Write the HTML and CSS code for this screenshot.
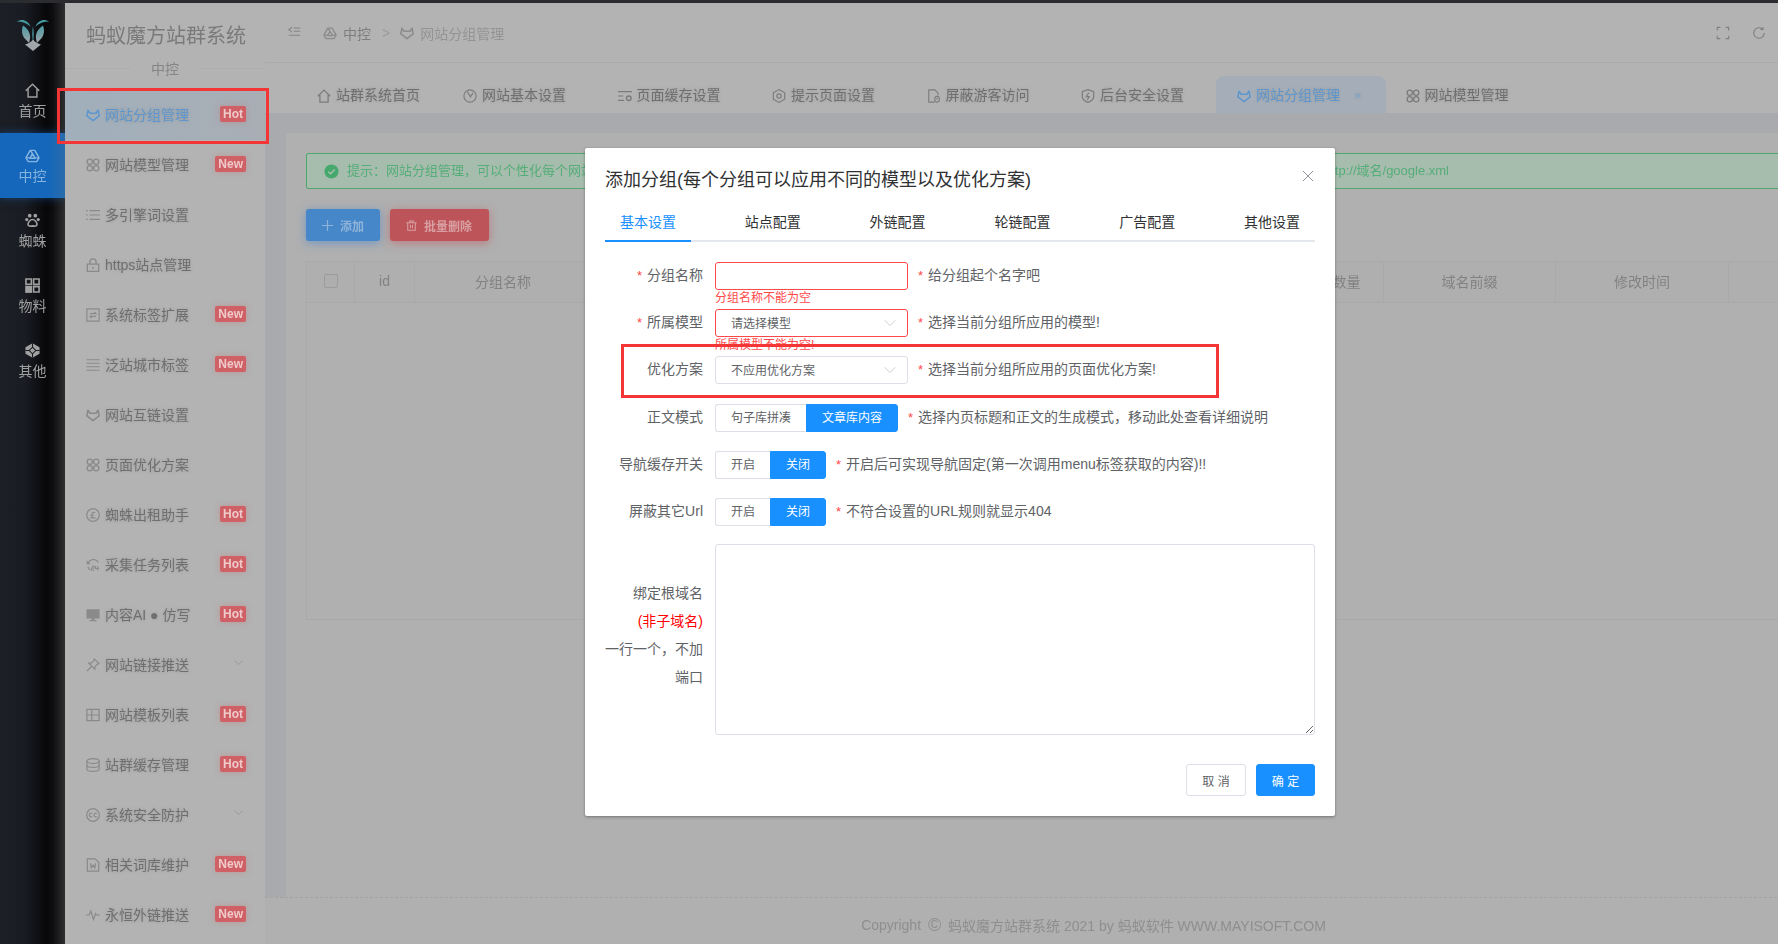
FILE: index.html
```html
<!DOCTYPE html>
<html lang="zh-CN">
<head>
<meta charset="utf-8">
<title>蚂蚁魔方站群系统</title>
<link rel="stylesheet" href="styles.css">
</head>
<body>
<svg class="defs" width="0" height="0" aria-hidden="true">
  <defs>
    <symbol id="i-fox" viewBox="0 0 16 16"><path d="M2.2 2.5 4.6 6h6.800l2.400-3.500L15 9l-7 5.500L1 9z" fill="none" stroke="currentColor" stroke-width="1.800" stroke-linejoin="round"/></symbol>
    <symbol id="i-apps" viewBox="0 0 16 16"><g fill="none" stroke="currentColor" stroke-width="1.500"><circle cx="4.300" cy="4.300" r="3"/><circle cx="11.700" cy="4.300" r="3"/><circle cx="4.300" cy="11.700" r="3"/><circle cx="11.700" cy="11.700" r="3"/></g></symbol>
    <symbol id="i-list" viewBox="0 0 16 16"><path d="M0 3h2M0 8h2M0 13h2M4 3h12M4 8h12M4 13h12" fill="none" stroke="currentColor" stroke-width="1.300"/></symbol>
    <symbol id="i-lock" viewBox="0 0 16 16"><path d="M1.500 7h13v8.300h-13zM4.500 7V4.500a3.500 3.500 0 0 1 7 0V7M8 10v2.500" fill="none" stroke="currentColor" stroke-width="1.500"/></symbol>
    <symbol id="i-tag" viewBox="0 0 16 16"><path d="M1 1h14v14H1zM4.500 6.500h7L9.500 4.500M11.500 9.500h-7l2 2" fill="none" stroke="currentColor" stroke-width="1.300"/></symbol>
    <symbol id="i-lines" viewBox="0 0 16 16"><path d="M.5 2h15M.5 6h15M.5 10h15M.5 14h15" fill="none" stroke="currentColor" stroke-width="1.300"/></symbol>
    <symbol id="i-pound" viewBox="0 0 16 16"><circle cx="8" cy="8" r="7.200" fill="none" stroke="currentColor" stroke-width="1.400"/><path d="M10.500 5.500A2.200 2.200 0 0 0 6.800 7v4M5 8.300h4M5 11.300h6" fill="none" stroke="currentColor" stroke-width="1.300"/></symbol>
    <symbol id="i-24" viewBox="0 0 16 16"><path d="M2.500 6A6.300 6.300 0 0 1 14 5M1.500 3.500v3h3M2.200 10a6.300 6.300 0 0 0 2.800 3.800" fill="none" stroke="currentColor" stroke-width="1.400"/><path d="M6.500 9.500h2.700v2H6.500v2.500h3M11 9v3h4M13.500 9v5.500" fill="none" stroke="currentColor" stroke-width="1.200"/></symbol>
    <symbol id="i-screen" viewBox="0 0 16 16"><path d="M.5 1.500h15V12H9.500v1.700H12V15H4v-1.300h2.500V12H.5z" fill="currentColor"/></symbol>
    <symbol id="i-pin" viewBox="0 0 16 16"><path d="M9.500 1 15 6.500 13 7l-3 3.500.3 2.500L3 5.700l2.500.3L9 3zM6 10 1 15" fill="none" stroke="currentColor" stroke-width="1.400" stroke-linejoin="round"/></symbol>
    <symbol id="i-table" viewBox="0 0 16 16"><path d="M1 1.500h14v13H1zM1 8h14M6.500 1.500v13" fill="none" stroke="currentColor" stroke-width="1.400"/></symbol>
    <symbol id="i-db" viewBox="0 0 16 16"><g fill="none" stroke="currentColor" stroke-width="1.400"><ellipse cx="8" cy="3.500" rx="7" ry="2.800"/><path d="M1 3.500v9c0 1.500 3.100 2.800 7 2.800s7-1.300 7-2.800v-9M1 8c0 1.500 3.100 2.800 7 2.800s7-1.300 7-2.800"/></g></symbol>
    <symbol id="i-cc" viewBox="0 0 16 16"><circle cx="8" cy="8" r="7.200" fill="none" stroke="currentColor" stroke-width="1.400"/><path d="M7 6.300a2.100 2.100 0 1 0 0 3.400M12.300 6.300a2.100 2.100 0 1 0 0 3.400" fill="none" stroke="currentColor" stroke-width="1.300"/></symbol>
    <symbol id="i-word" viewBox="0 0 16 16"><path d="M1.500 1h9L14.500 5v10h-13zM5 6l1 5.500 2-3.500 2 3.500 1-5.500" fill="none" stroke="currentColor" stroke-width="1.400"/></symbol>
    <symbol id="i-pulse" viewBox="0 0 16 16"><path d="M0 8h3.500L5.500 3.500l3 9.500L11 6.500l1 1.500h4" fill="none" stroke="currentColor" stroke-width="1.400"/></symbol>
    <symbol id="i-home" viewBox="0 0 16 16"><path d="M.8 8.200 8 1.300l7.200 6.900M3.300 6.500v8.500h9.400V6.500" fill="none" stroke="currentColor" stroke-width="1.500"/></symbol>
    <symbol id="i-drive" viewBox="0 0 16 16"><path d="M5.500 2.500h5L15 10.500 12.500 14.500h-9L1 10.500zM8 6 5.200 11h5.600zM5.500 2.500 8 6M1 10.500h4.200M15 10.500h-4.200" fill="none" stroke="currentColor" stroke-width="1.500" stroke-linejoin="round"/></symbol>
    <symbol id="i-paw" viewBox="0 0 16 16"><g fill="currentColor"><circle cx="5" cy="2.800" r="2"/><circle cx="11" cy="2.800" r="2"/><circle cx="1.900" cy="7" r="1.700"/><circle cx="14.100" cy="7" r="1.700"/></g><path d="M8 7c-2.500 0-4.800 3-4.800 5.200 0 2 2.300 2 4.800 1.500 2.500.5 4.800.5 4.800-1.500C12.800 10 10.500 7 8 7z" fill="none" stroke="currentColor" stroke-width="1.700"/></symbol>
    <symbol id="i-blocks" viewBox="0 0 16 16"><g fill="none" stroke="currentColor" stroke-width="1.700"><path d="M1 1h5.800v5.800H1zM9.200 1H15v5.800H9.200zM9.200 9.200H15V15H9.200z"/></g><path d="M.2 8.500h7.400v7.400H.2z" fill="currentColor"/></symbol>
    <symbol id="i-cube" viewBox="0 0 16 16"><path d="M8 .3 15.500 4.600v6.800L8 15.700.5 11.400V4.600z" fill="currentColor"/><path d="M8 4.500 11.500 8 8 11.500 4.500 8zM.5 8h4M11.500 8h4M8 .3v4.200M8 11.500v4.200" fill="none" stroke="#17191e" stroke-width="1.100"/></symbol>
    <symbol id="i-clock" viewBox="0 0 16 16"><circle cx="8" cy="8" r="7" fill="none" stroke="currentColor" stroke-width="1.300"/><path d="M5 3l3.500 6L11.500 4.500" fill="none" stroke="currentColor" stroke-width="1.300"/></symbol>
    <symbol id="i-filter" viewBox="0 0 16 16"><path d="M0 3h16M0 8h6M0 13h7" fill="none" stroke="currentColor" stroke-width="1.300"/><circle cx="12.300" cy="10.500" r="2.600" fill="none" stroke="currentColor" stroke-width="1.700"/></symbol>
    <symbol id="i-target" viewBox="0 0 16 16"><path d="M8 .7 14.500 4.400v7.200L8 15.300 1.500 11.600V4.400z" fill="none" stroke="currentColor" stroke-width="1.300"/><circle cx="8" cy="8" r="2.500" fill="none" stroke="currentColor" stroke-width="1.300"/></symbol>
    <symbol id="i-file" viewBox="0 0 16 16"><path d="M8.500 15H2V1h7l3.500 3.500V7M11.500 8.500c1.500 0 2.500 1 2.500 2.300v2c0 1.300-1 2.200-2.500 2.200S9 14.100 9 12.800v-2C9 9.500 10 8.500 11.500 8.500zM11.500 10v2" fill="none" stroke="currentColor" stroke-width="1.300"/></symbol>
    <symbol id="i-shield" viewBox="0 0 16 16"><path d="M8 .8 14.500 3v5.500c0 3.200-2.700 5.300-6.500 6.800-3.800-1.500-6.500-3.600-6.500-6.800V3z" fill="none" stroke="currentColor" stroke-width="1.400"/><path d="M9 4 6 8.700h3.400L7.200 12.500" fill="none" stroke="currentColor" stroke-width="1.300"/></symbol>
    <symbol id="i-chevron" viewBox="0 0 16 16"><path d="M2 5l6 6 6-6" fill="none" stroke="currentColor" stroke-width="1"/></symbol>
    <symbol id="i-collapse" viewBox="0 0 16 16"><path d="M5 1.500 1 4.500 5 7.500M7 2.500h8M7 6.500h8M1 11.500h14" fill="none" stroke="currentColor" stroke-width="1.300"/></symbol>
    <symbol id="i-full" viewBox="0 0 16 16"><path d="M1.500 5V1.500H5M11 1.500h3.500V5M14.500 11v3.500H11M5 14.500H1.500V11" fill="none" stroke="currentColor" stroke-width="1.300"/></symbol>
    <symbol id="i-refresh" viewBox="0 0 16 16"><path d="M14 8a6 6 0 1 1-2-4.500M12.500 1v3h-3" fill="none" stroke="currentColor" stroke-width="1.300"/></symbol>
    <symbol id="i-trash" viewBox="0 0 16 16"><path d="M.5 4h15M5.500 4V1.500h5V4M2.500 4v11h11V4M6.500 7v5M9.500 7v5" fill="none" stroke="currentColor" stroke-width="1.500"/></symbol>
    <symbol id="i-check" viewBox="0 0 16 16"><circle cx="8" cy="8" r="7.500" fill="currentColor"/><path d="M4.500 8.200 7 10.500l4.500-4.700" fill="none" stroke="#a7bfae" stroke-width="1.500"/></symbol>
    <linearGradient id="logo-body" x1="0" y1="0" x2="0" y2="1"><stop offset="0" stop-color="#469aa1"/><stop offset="1" stop-color="#a0a6aa"/></linearGradient>
  </defs>
</svg>

<div class="topline"></div>
<div class="app">
  <nav class="rail">
    <div class="logo">
      <svg class="logo-svg" viewBox="22 28 106 100">
        <path d="M24 36C40 26 58 30 68 52 56 42 42 36 24 36z" fill="#469aa1"/>
        <path d="M126 36C110 26 92 30 82 52 94 42 108 36 126 36z" fill="#469aa1"/>
        <path d="M44 48C54 56 66 66 66 84c0 8-2 14-4 18L50 90C40 78 38 62 44 48z" fill="url(#logo-body)"/>
        <path d="M106 48C96 56 84 66 84 84c0 8 2 14 4 18l12-12c10-12 12-28 6-42z" fill="url(#logo-body)"/>
        <path d="M75 50c3 16 3 34 0 50-3-16-3-34 0-50z" fill="#469aa1"/>
        <path d="M75 92c5 8 15 12 25 16l-25 20-25-20c10-4 20-8 25-16z" fill="#a0a6aa"/>
      </svg>
    </div>
    <a class="rail-item"><svg class="rail-icon"><use href="#i-home"/></svg><span>首页</span></a>
    <a class="rail-item is-active"><svg class="rail-icon"><use href="#i-drive"/></svg><span>中控</span></a>
    <a class="rail-item"><svg class="rail-icon"><use href="#i-paw"/></svg><span>蜘蛛</span></a>
    <a class="rail-item"><svg class="rail-icon"><use href="#i-blocks"/></svg><span>物料</span></a>
    <a class="rail-item"><svg class="rail-icon"><use href="#i-cube"/></svg><span>其他</span></a>
  </nav>

  <aside class="side">
    <div class="side-title">蚂蚁魔方站群系统</div>
    <div class="side-sub"><span>中控</span></div>
    <ul class="menu">
      <li class="menu-item is-active"><svg class="mi"><use href="#i-fox"/></svg><span class="mt">网站分组管理</span><b class="badge">Hot</b></li>
      <li class="menu-item"><svg class="mi"><use href="#i-apps"/></svg><span class="mt">网站模型管理</span><b class="badge">New</b></li>
      <li class="menu-item"><svg class="mi"><use href="#i-list"/></svg><span class="mt">多引擎词设置</span></li>
      <li class="menu-item"><svg class="mi"><use href="#i-lock"/></svg><span class="mt">https站点管理</span></li>
      <li class="menu-item"><svg class="mi"><use href="#i-tag"/></svg><span class="mt">系统标签扩展</span><b class="badge">New</b></li>
      <li class="menu-item"><svg class="mi"><use href="#i-lines"/></svg><span class="mt">泛站城市标签</span><b class="badge">New</b></li>
      <li class="menu-item"><svg class="mi"><use href="#i-fox"/></svg><span class="mt">网站互链设置</span></li>
      <li class="menu-item"><svg class="mi"><use href="#i-apps"/></svg><span class="mt">页面优化方案</span></li>
      <li class="menu-item"><svg class="mi"><use href="#i-pound"/></svg><span class="mt">蜘蛛出租助手</span><b class="badge">Hot</b></li>
      <li class="menu-item"><svg class="mi"><use href="#i-24"/></svg><span class="mt">采集任务列表</span><b class="badge">Hot</b></li>
      <li class="menu-item"><svg class="mi"><use href="#i-screen"/></svg><span class="mt">内容AI ● 仿写</span><b class="badge">Hot</b></li>
      <li class="menu-item"><svg class="mi"><use href="#i-pin"/></svg><span class="mt">网站链接推送</span><svg class="chev"><use href="#i-chevron"/></svg></li>
      <li class="menu-item"><svg class="mi"><use href="#i-table"/></svg><span class="mt">网站模板列表</span><b class="badge">Hot</b></li>
      <li class="menu-item"><svg class="mi"><use href="#i-db"/></svg><span class="mt">站群缓存管理</span><b class="badge">Hot</b></li>
      <li class="menu-item"><svg class="mi"><use href="#i-cc"/></svg><span class="mt">系统安全防护</span><svg class="chev"><use href="#i-chevron"/></svg></li>
      <li class="menu-item"><svg class="mi"><use href="#i-word"/></svg><span class="mt">相关词库维护</span><b class="badge">New</b></li>
      <li class="menu-item"><svg class="mi"><use href="#i-pulse"/></svg><span class="mt">永恒外链推送</span><b class="badge">New</b></li>
    </ul>
  </aside>

  <main class="main">
    <header class="head">
      <svg class="head-collapse"><use href="#i-collapse"/></svg>
      <svg class="crumb-icon crumb-first"><use href="#i-drive"/></svg>
      <span class="crumb-strong">中控</span>
      <span class="crumb-sep">&gt;</span>
      <svg class="crumb-icon"><use href="#i-fox"/></svg>
      <span class="crumb-last">网站分组管理</span>
      <div class="tools">
        <svg class="tool"><use href="#i-full"/></svg>
        <svg class="tool"><use href="#i-refresh"/></svg>
      </div>
    </header>
    <div class="tabs">
      <a class="tab tab-first"><svg class="tab-icon"><use href="#i-home"/></svg>站群系统首页</a>
      <a class="tab"><svg class="tab-icon"><use href="#i-clock"/></svg>网站基本设置</a>
      <a class="tab"><svg class="tab-icon"><use href="#i-filter"/></svg>页面缓存设置</a>
      <a class="tab"><svg class="tab-icon"><use href="#i-target"/></svg>提示页面设置</a>
      <a class="tab"><svg class="tab-icon"><use href="#i-file"/></svg>屏蔽游客访问</a>
      <a class="tab tab-before"><svg class="tab-icon"><use href="#i-shield"/></svg>后台安全设置</a>
      <a class="tab is-active"><svg class="tab-icon"><use href="#i-fox"/></svg>网站分组管理<span class="tab-close">×</span></a>
      <a class="tab"><svg class="tab-icon"><use href="#i-apps"/></svg>网站模型管理</a>
    </div>
    <section class="body">
      <div class="card">
        <div class="alert">
          <svg class="alert-icon"><use href="#i-check"/></svg>
          <span class="alert-text">提示：网站分组管理，可以个性化每个网站</span>
          <span class="alert-tail">http://域名/google.xml</span>
        </div>
        <div class="actions">
          <button class="btn btn-add" type="button"><svg class="btn-icon"><path d="M5.500 0v11M0 5.500h11" fill="none" stroke="currentColor" stroke-width="1.200"/></svg>添加</button>
          <button class="btn btn-del" type="button"><svg class="btn-icon"><use href="#i-trash"/></svg>批量删除</button>
        </div>
        <div class="table">
          <div class="thead">
            <div class="th"><span class="cb"></span></div>
            <div class="th">id</div>
            <div class="th">分组名称</div>
            <div class="th"></div>
            <div class="th">域名数量</div>
            <div class="th">域名前缀</div>
            <div class="th">修改时间</div>
            <div class="th"></div>
          </div>
        </div>
      </div>
    </section>
    <footer class="foot">Copyright <span class="copy">©</span> 蚂蚁魔方站群系统 2021 by 蚂蚁软件 WWW.MAYISOFT.COM</footer>
  </main>
</div>

<div class="mark mark-menu"></div>

<div class="dialog">
  <h2 class="dialog-title">添加分组(每个分组可以应用不同的模型以及优化方案)</h2>
  <svg class="dialog-close" viewBox="0 0 12 12"><path d="M1 1l10 10M11 1 1 11" fill="none" stroke="currentColor" stroke-width="1"/></svg>
  <div class="dtabs">
    <span class="dtab is-active">基本设置</span>
    <span class="dtab">站点配置</span>
    <span class="dtab">外链配置</span>
    <span class="dtab">轮链配置</span>
    <span class="dtab">广告配置</span>
    <span class="dtab">其他设置</span>
  </div>
  <form class="form">
    <div class="row">
      <label class="label"><i class="req">*</i>分组名称</label>
      <div class="control"><input class="input is-error" type="text"><span class="err">分组名称不能为空</span></div>
      <p class="help"><i class="req">*</i>给分组起个名字吧</p>
    </div>
    <div class="row">
      <label class="label"><i class="req">*</i>所属模型</label>
      <div class="control"><div class="select is-error"><span class="sel-text">请选择模型</span><svg class="sel-chev"><use href="#i-chevron"/></svg></div><span class="err">所属模型不能为空!</span></div>
      <p class="help"><i class="req">*</i>选择当前分组所应用的模型!</p>
    </div>
    <div class="row row-wide">
      <label class="label">优化方案</label>
      <div class="control"><div class="select"><span class="sel-text">不应用优化方案</span><svg class="sel-chev"><use href="#i-chevron"/></svg></div></div>
      <p class="help"><i class="req">*</i>选择当前分组所应用的页面优化方案!</p>
    </div>
    <div class="row">
      <label class="label">正文模式</label>
      <div class="radio"><span class="rb">句子库拼凑</span><span class="rb is-on">文章库内容</span></div>
      <p class="help"><i class="req">*</i>选择内页标题和正文的生成模式，移动此处查看详细说明</p>
    </div>
    <div class="row">
      <label class="label">导航缓存开关</label>
      <div class="radio"><span class="rb">开启</span><span class="rb is-on">关闭</span></div>
      <p class="help"><i class="req">*</i>开启后可实现导航固定(第一次调用menu标签获取的内容)!!</p>
    </div>
    <div class="row row-narrow">
      <label class="label">屏蔽其它Url</label>
      <div class="radio"><span class="rb">开启</span><span class="rb is-on">关闭</span></div>
      <p class="help"><i class="req">*</i>不符合设置的URL规则就显示404</p>
    </div>
    <div class="row row-area">
      <label class="label label-stack">绑定根域名<br><em class="red">(非子域名)</em><br>一行一个，不加<br>端口</label>
      <textarea class="area"></textarea>
    </div>
  </form>
  <div class="dialog-foot">
    <button class="dbtn" type="button">取 消</button>
    <button class="dbtn dbtn-primary" type="button">确 定</button>
  </div>
  <div class="mark mark-row"></div>
</div>
</body>
</html>
```
FILE: styles.css
```css
* { box-sizing: border-box; }
html, body { margin: 0; padding: 0; width: 100%; height: 100%; overflow: hidden; background: #b0b0b0; }
body { position: relative; font-family: "Liberation Sans", "Noto Sans CJK SC", sans-serif; font-size: 14px; color: #606266; }
.defs { position: absolute; }
i, em { font-style: normal; }
ul { list-style: none; margin: 0; padding: 0; }

.topline { height: 3px; background: #2b2c30; position: relative; z-index: 2; }
.app { display: flex; height: 941px; width: 1922px; filter: blur(.7px); }

/* icon rail */
.rail { flex: none; width: 65px; background: linear-gradient(90deg, #1c1f26 0, #1a1c23 25px, #08080a 46px, #0c0c0e 52px, #2e2e30 65px); }
.logo { height: 65px; display: flex; justify-content: center; padding-top: 16px; }
.logo-svg { width: 34px; height: 32px; }
.rail-item { display: flex; flex-direction: column; align-items: center; gap: 3px; height: 65px; padding-top: 15px; color: #a0a0a0; }
.rail-icon { width: 15px; height: 15px; }
.rail-item span { line-height: 20px; }
.rail-item.is-active { background: linear-gradient(90deg, #1467bb 0, #1467bb 48px, #2a6cab 65px); color: #86b4e0; box-shadow: 0 0 8px rgba(20, 100, 180, .55); }

/* secondary menu */
.side { flex: none; width: 200px; background: #b3b3b3; color: #6f6f6f; }
.side-title { font-size: 20px; line-height: 30px; padding: 18px 0 0 21px; color: #7a7a7a; white-space: nowrap; height: 50px; }
.side-sub { height: 30px; margin-bottom: 7px; display: flex; align-items: center; justify-content: center; color: #858585; position: relative; }
.side-sub span { background: #b3b3b3; padding: 0 20px; position: relative; }
.side-sub::before { content: ""; position: absolute; left: 0; right: 0; top: 50%; border-top: 1px solid #aeaeae; }
.menu-item { display: flex; align-items: center; height: 50px; padding: 0 19px 0 21px; text-shadow: 0 0 3px rgba(120, 120, 120, .4); }
.menu-item.is-active { background: linear-gradient(90deg, #a0afbb, #a9aeb5); color: #5f96cd; }
.mi { width: 14px; height: 14px; flex: none; margin-right: 5px; color: #8a8a8a; }
.is-active .mi { color: #5f96cd; }
.mt { flex: 1; white-space: nowrap; margin-top: -2px; }
.badge { font-size: 12px; line-height: 16px; height: 16px; padding: 0 3px; border-radius: 2px; background: #cf6066; color: #f0caca; font-weight: 700; margin-top: -3px; box-shadow: 0 0 6px rgba(207, 96, 102, .35); text-shadow: none; }
.chev { width: 11px; height: 11px; color: #8f8f8f; margin: -6px 2px 0 0; }

/* main */
.main { flex: none; width: 1657px; display: flex; flex-direction: column; background: #a9aaae; }
.head { flex: none; height: 60px; display: flex; align-items: center; padding-left: 23px; background: #b3b3b3; border-bottom: 1px solid #ababab; color: #8b8b8b; }
.head-collapse { width: 13px; height: 13px; margin-right: 22px; color: #858585; }
.crumb-icon { width: 14px; height: 14px; margin-right: 6px; color: #8c8c8c; }
.crumb-strong { color: #7e7e7e; }
.crumb-sep { margin: 0 10px 0 11px; color: #9a9a9a; }
.crumb-last { color: #949494; }
.tools { margin-left: auto; margin-right: 156px; display: flex; gap: 22px; color: #808080; }
.tool { width: 14px; height: 14px; }

.tabs { flex: none; height: 50px; display: flex; align-items: flex-end; padding-left: 52px; background: #b3b3b3; color: #6f6f6f; }
.tab { display: flex; align-items: center; height: 37px; line-height: 37px; padding-top: 2px; margin-right: 51.500px; white-space: nowrap; text-shadow: 0 0 3px rgba(120, 120, 120, .4); }
.tab-first { margin-right: 43px; }
.tab-before { margin-right: 32px; }
.tab-icon { width: 14px; height: 14px; margin-right: 5px; color: #7c7c7c; flex: none; }
.tab.is-active { background: #a5aeb8; color: #5f96cd; padding: 2px 24px 0 21px; margin-right: 20px; border-radius: 8px 8px 0 0; }
.tab.is-active .tab-icon { color: #5f96cd; }
.tab-close { margin-left: 14px; font-size: 13px; color: #7ea5cb; }

.body { flex: 1; padding: 20px 21px 0; min-height: 0; }
.card { height: 100%; background: #b0b0b0; padding: 20px; }
.alert { height: 36px; display: flex; align-items: center; padding: 0 431px 3px 17px; border: 1px solid #4ea86d; border-radius: 2px; background: #a6bcac; color: #55ae79; font-size: 13px; white-space: nowrap; overflow: hidden; }
.alert-icon { width: 15px; height: 15px; margin: 3px 8px 0 0; color: #45a86c; flex: none; }
.alert-tail { margin-left: auto; }
.actions { display: flex; gap: 10px; margin: 20px 0; }
.btn { height: 32px; display: flex; align-items: center; padding: 0 16px; border: 0; border-radius: 3px; font: inherit; font-size: 12px; font-weight: 700; white-space: nowrap; }
.btn-icon { width: 11px; height: 11px; margin-right: 7px; flex: none; }
.btn-add { width: 74px; background: #4587c9; color: #8fb3d9; box-shadow: 0 2px 10px rgba(60, 130, 210, .55); }
.btn-del { width: 99px; background: #bd5459; color: #d9a0a3; box-shadow: 0 2px 10px rgba(200, 70, 80, .5); }
.table { height: 359px; border: 1px solid #a9a9a9; }
.thead { display: grid; grid-template-columns: 48px 60px 177px 690px 102px 172px 173px 173px 1fr; height: 41px; background: #afafaf; border-bottom: 1px solid #a9a9a9; }
.th { display: flex; align-items: center; justify-content: center; padding-bottom: 2px; border-right: 1px solid #a9a9a9; color: #828282; }
.cb { width: 14px; height: 14px; border: 1px solid #9b9b9b; border-radius: 2px; background: #aeaeae; }
.foot { flex: none; height: 47px; display: flex; align-items: center; justify-content: center; gap: 3px; padding-top: 8px; border-top: 1px dashed #a3a3a3; color: #8e8e8e; background: #b0b0b0; white-space: pre; }
.copy { font-size: 18px; line-height: 1; }

/* dialog */
.dialog { position: absolute; left: 585px; top: 148px; width: 750px; height: 668px; padding: 20px 20px 0; background: #fff; border-radius: 2px; box-shadow: 0 1px 3px rgba(0, 0, 0, .35); z-index: 3; }
.dialog-title { margin: 0; font-size: 18px; font-weight: 400; line-height: 24px; color: #303133; white-space: nowrap; }
.dialog-close { position: absolute; right: 21px; top: 22px; width: 12px; height: 12px; color: #909399; }
.dtabs { display: flex; gap: 39px; height: 41px; margin-top: 9px; border-bottom: 2px solid #e4e7ed; color: #303133; }
.dtab { width: 86px; height: 41px; line-height: 43px; text-align: center; }
.dtab.is-active { color: #1890ff; border-bottom: 2px solid #1890ff; }
.form { padding-top: 20px; }
.row { display: flex; align-items: center; height: 28px; margin-bottom: 19px; }
.row-wide { margin-bottom: 20px; }
.row-narrow { margin-bottom: 18px; }
.label { width: 98px; flex: none; padding-bottom: 2px; text-align: right; color: #606266; white-space: nowrap; line-height: 28px; }
.req { color: #ff4949; margin-right: 5px; font-size: 13px; }
.control { position: relative; width: 193px; flex: none; margin-left: 12px; }
.input, .select { display: flex; align-items: center; width: 193px; height: 28px; padding: 0 15px; border: 1px solid #dcdfe6; border-radius: 3px; font-size: 12px; color: #606266; background: #fff; outline: 0; }
.is-error { border-color: #ff4949; }
.sel-text { padding-bottom: 2px; }
.sel-chev { width: 14px; height: 14px; margin-left: auto; margin-right: -5px; color: #c0c4cc; }
.err { position: absolute; left: 0; top: 100%; padding-top: 2px; font-size: 12px; line-height: 13px; color: #ff4949; white-space: nowrap; }
.help { margin: 0 0 0 10px; padding-bottom: 4px; white-space: nowrap; color: #606266; }
.radio { display: flex; margin-left: 12px; flex: none; }
.rb { height: 28px; line-height: 26px; padding: 0 15px; border: 1px solid #dcdfe6; font-size: 12px; color: #606266; background: #fff; white-space: nowrap; }
.rb:first-child { border-radius: 3px 0 0 3px; border-right: 0; }
.rb:last-child { border-radius: 0 3px 3px 0; }
.rb.is-on { background: #1890ff; border-color: #1890ff; color: #fff; }
.row-area { height: 191px; margin-bottom: 0; }
.label-stack { white-space: normal; padding-bottom: 0; margin-bottom: 9px; }
.red { color: #ff0000; }
.area { display: block; width: 600px; height: 191px; margin-left: 12px; border: 1px solid #dcdfe6; border-radius: 3px; background: #fff; outline: 0; }
.dialog-foot { display: flex; justify-content: flex-end; gap: 10px; margin-top: 29px; }
.dbtn { width: 60px; height: 32px; border: 1px solid #dcdfe6; border-radius: 3px; background: #fff; color: #606266; font: inherit; font-size: 12px; }
.dbtn-primary { width: 59px; background: #1890ff; border-color: #1890ff; color: #fff; }

/* annotation boxes drawn over the screenshot */
.mark { position: absolute; border: 3px solid #f43535; pointer-events: none; z-index: 4; }
.mark-menu { left: 57px; top: 88px; width: 212px; height: 56px; }
.mark-row { left: 36px; top: 196px; width: 598px; height: 54px; }
```
